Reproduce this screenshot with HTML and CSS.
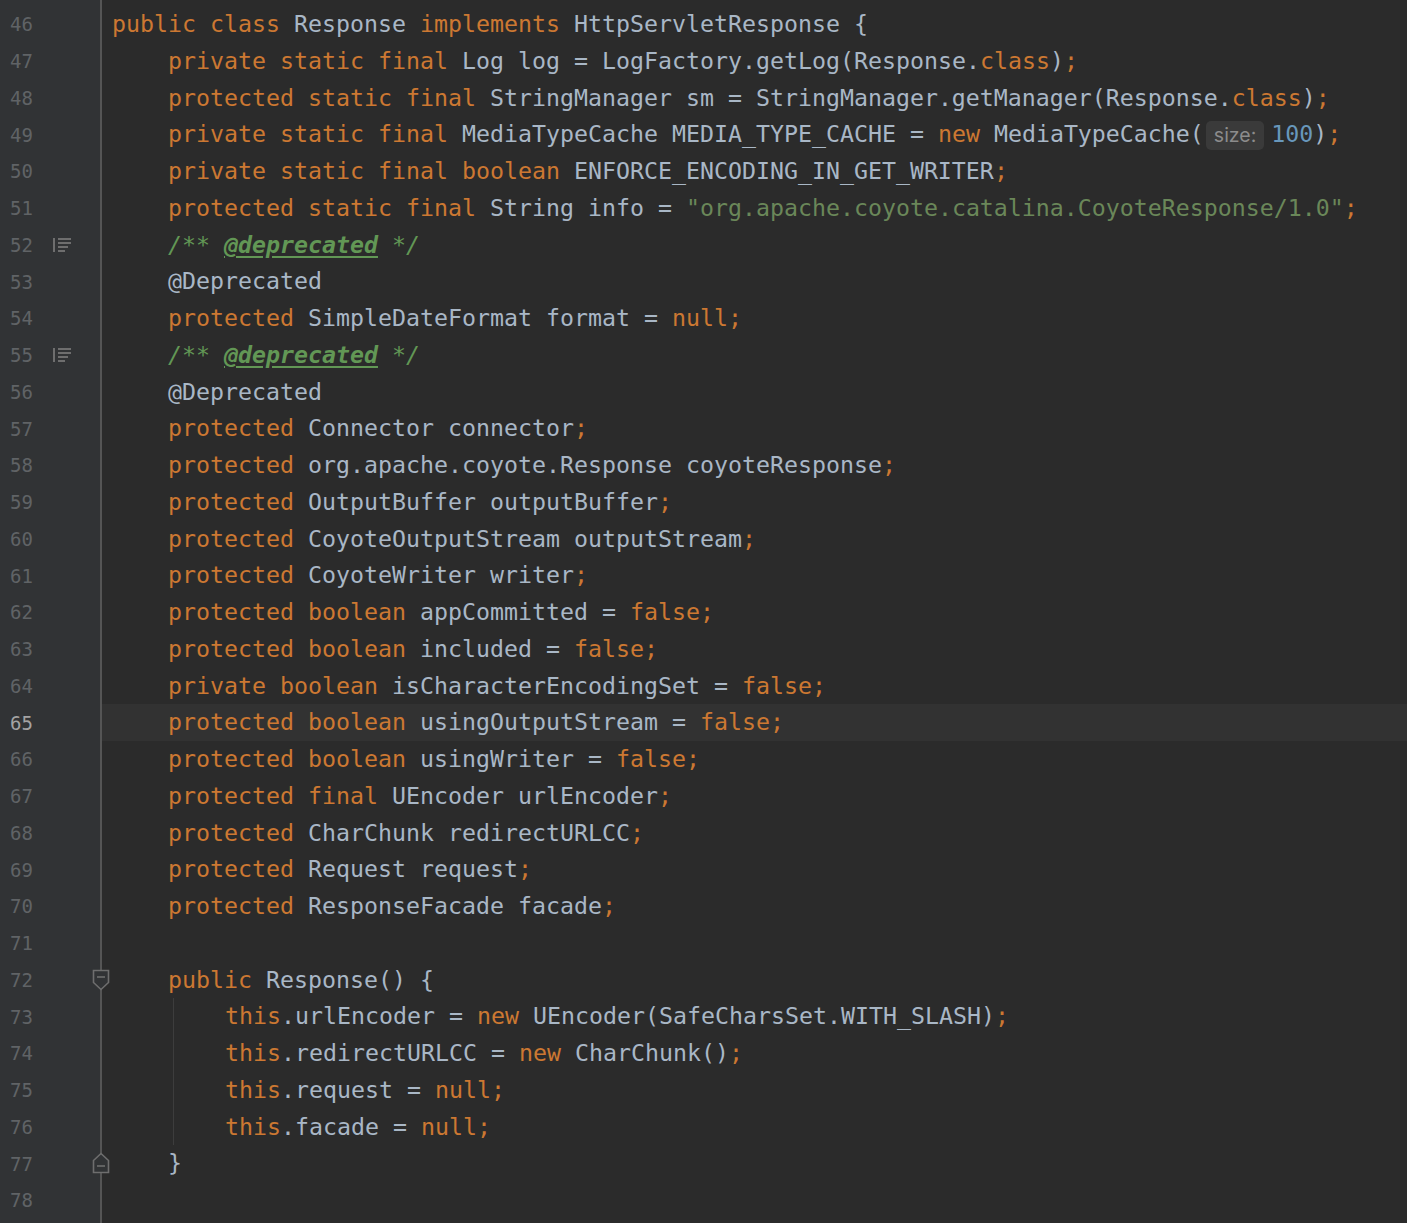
FILE: index.html
```html
<!DOCTYPE html>
<html lang="en">
<head>
    <meta charset="UTF-8">
    <title>Response.java</title>
    <link rel="stylesheet" href="styles.css">
</head>
<body>
    <div class="editor">
        <div class="line"><span class="num">46</span><span class="gut"></span><code><span class="k">public class</span> Response <span class="k">implements</span> HttpServletResponse {</code></div>
        <div class="line"><span class="num">47</span><span class="gut"></span><code>    <span class="k">private static final</span> Log log = LogFactory.getLog(Response.<span class="k">class</span>)<span class="k">;</span></code></div>
        <div class="line"><span class="num">48</span><span class="gut"></span><code>    <span class="k">protected static final</span> StringManager sm = StringManager.getManager(Response.<span class="k">class</span>)<span class="k">;</span></code></div>
        <div class="line"><span class="num">49</span><span class="gut"></span><code>    <span class="k">private static final</span> MediaTypeCache MEDIA_TYPE_CACHE = <span class="k">new</span> MediaTypeCache(<span class="hint">size:</span><span class="n">100</span>)<span class="k">;</span></code></div>
        <div class="line"><span class="num">50</span><span class="gut"></span><code>    <span class="k">private static final boolean</span> ENFORCE_ENCODING_IN_GET_WRITER<span class="k">;</span></code></div>
        <div class="line"><span class="num">51</span><span class="gut"></span><code>    <span class="k">protected static final</span> String info = <span class="s">"org.apache.coyote.catalina.CoyoteResponse/1.0"</span><span class="k">;</span></code></div>
        <div class="line"><span class="num">52</span><span class="gut"><svg class="doc" width="20" height="16" viewBox="0 0 20 16"><rect x="1" y="1" width="2" height="14"/><rect x="6" y="1" width="13" height="2"/><rect x="6" y="5" width="13" height="2"/><rect x="6" y="9" width="10" height="2"/><rect x="6" y="13" width="7" height="2"/></svg></span><code>    <span class="c">/** <span class="tag">@deprecated</span> */</span></code></div>
        <div class="line"><span class="num">53</span><span class="gut"></span><code>    @Deprecated</code></div>
        <div class="line"><span class="num">54</span><span class="gut"></span><code>    <span class="k">protected</span> SimpleDateFormat format = <span class="k">null;</span></code></div>
        <div class="line"><span class="num">55</span><span class="gut"><svg class="doc" width="20" height="16" viewBox="0 0 20 16"><rect x="1" y="1" width="2" height="14"/><rect x="6" y="1" width="13" height="2"/><rect x="6" y="5" width="13" height="2"/><rect x="6" y="9" width="10" height="2"/><rect x="6" y="13" width="7" height="2"/></svg></span><code>    <span class="c">/** <span class="tag">@deprecated</span> */</span></code></div>
        <div class="line"><span class="num">56</span><span class="gut"></span><code>    @Deprecated</code></div>
        <div class="line"><span class="num">57</span><span class="gut"></span><code>    <span class="k">protected</span> Connector connector<span class="k">;</span></code></div>
        <div class="line"><span class="num">58</span><span class="gut"></span><code>    <span class="k">protected</span> org.apache.coyote.Response coyoteResponse<span class="k">;</span></code></div>
        <div class="line"><span class="num">59</span><span class="gut"></span><code>    <span class="k">protected</span> OutputBuffer outputBuffer<span class="k">;</span></code></div>
        <div class="line"><span class="num">60</span><span class="gut"></span><code>    <span class="k">protected</span> CoyoteOutputStream outputStream<span class="k">;</span></code></div>
        <div class="line"><span class="num">61</span><span class="gut"></span><code>    <span class="k">protected</span> CoyoteWriter writer<span class="k">;</span></code></div>
        <div class="line"><span class="num">62</span><span class="gut"></span><code>    <span class="k">protected boolean</span> appCommitted = <span class="k">false;</span></code></div>
        <div class="line"><span class="num">63</span><span class="gut"></span><code>    <span class="k">protected boolean</span> included = <span class="k">false;</span></code></div>
        <div class="line"><span class="num">64</span><span class="gut"></span><code>    <span class="k">private boolean</span> isCharacterEncodingSet = <span class="k">false;</span></code></div>
        <div class="line current"><span class="num">65</span><span class="gut"></span><code>    <span class="k">protected boolean</span> usingOutputStream = <span class="k">false;</span></code></div>
        <div class="line"><span class="num">66</span><span class="gut"></span><code>    <span class="k">protected boolean</span> usingWriter = <span class="k">false;</span></code></div>
        <div class="line"><span class="num">67</span><span class="gut"></span><code>    <span class="k">protected final</span> UEncoder urlEncoder<span class="k">;</span></code></div>
        <div class="line"><span class="num">68</span><span class="gut"></span><code>    <span class="k">protected</span> CharChunk redirectURLCC<span class="k">;</span></code></div>
        <div class="line"><span class="num">69</span><span class="gut"></span><code>    <span class="k">protected</span> Request request<span class="k">;</span></code></div>
        <div class="line"><span class="num">70</span><span class="gut"></span><code>    <span class="k">protected</span> ResponseFacade facade<span class="k">;</span></code></div>
        <div class="line"><span class="num">71</span><span class="gut"></span><code></code></div>
        <div class="line"><span class="num">72</span><span class="gut"><svg class="fold" width="18" height="22" viewBox="0 0 18 22"><path d="M1.5 1.5h15v12l-7.5 7-7.5-7z"/><line x1="5" y1="8" x2="13" y2="8"/></svg></span><code>    <span class="k">public</span> Response() {</code></div>
        <div class="line"><span class="num">73</span><span class="gut"></span><code>    <span class="guide"></span>    <span class="k">this</span>.urlEncoder = <span class="k">new</span> UEncoder(SafeCharsSet.WITH_SLASH)<span class="k">;</span></code></div>
        <div class="line"><span class="num">74</span><span class="gut"></span><code>    <span class="guide"></span>    <span class="k">this</span>.redirectURLCC = <span class="k">new</span> CharChunk()<span class="k">;</span></code></div>
        <div class="line"><span class="num">75</span><span class="gut"></span><code>    <span class="guide"></span>    <span class="k">this</span>.request = <span class="k">null;</span></code></div>
        <div class="line"><span class="num">76</span><span class="gut"></span><code>    <span class="guide"></span>    <span class="k">this</span>.facade = <span class="k">null;</span></code></div>
        <div class="line"><span class="num">77</span><span class="gut"><svg class="fold" width="18" height="22" viewBox="0 0 18 22"><path d="M1.5 20.5h15v-12l-7.5-7-7.5 7z"/><line x1="5" y1="14" x2="13" y2="14"/></svg></span><code>    }</code></div>
        <div class="line"><span class="num">78</span><span class="gut"></span><code></code></div>
    </div>
</body>
</html>
```

FILE: styles.css
```css
body {
    margin: 0;
    background: #2b2b2b;
    overflow: hidden;
}
.editor {
    padding-top: 6px;
    background: linear-gradient(to right, #313335 0, #313335 100px, #555555 100px, #555555 102px, #2b2b2b 102px);
    min-height: 1223px;
    box-sizing: border-box;
}
.line {
    display: flex;
    height: 36.75px;
    align-items: center;
}
.num {
    width: 36px;
    padding-left: 10px;
    font-family: "DejaVu Sans Mono", monospace;
    font-size: 19px;
    color: #606366;
}
.current .num {
    color: #a4a3a3;
}
.gut {
    position: relative;
    width: 56px;
    height: 100%;
    display: flex;
    align-items: center;
}
.doc {
    margin-left: 6px;
    fill: #6e6e6e;
}
.fold {
    position: absolute;
    left: 46px;
    top: 7px;
    fill: #313335;
    stroke: #6e6e6e;
    stroke-width: 1.6;
}
code {
    display: block;
    flex: 1;
    height: 36.75px;
    line-height: 36.75px;
    padding-left: 10px;
    white-space: pre;
    font-family: "DejaVu Sans Mono", monospace;
    font-size: 23.25px;
    color: #a9b7c6;
}
.current code {
    background: #323232;
}
.k { color: #cc7832; }
.s { color: #6a8759; }
.n { color: #6897bb; }
.c {
    color: #629755;
    font-style: italic;
}
.tag {
    font-weight: bold;
    text-decoration: underline;
    text-underline-offset: 3px;
}
.hint {
    display: inline-block;
    font-family: Inter, "Noto Sans", sans-serif;
    font-size: 19.5px;
    color: #8c8c8c;
    background: #3a3a3a;
    border-radius: 5px;
    padding: 2px 8px 2px 8px;
    margin: 0 7px 0 2px;
    line-height: 25px;
}
.guide {
    display: inline-block;
    vertical-align: top;
    width: 0;
    height: 36.75px;
    border-left: 1px solid #3d3d3d;
    margin-left: 5px;
    margin-right: -5px;
}
```
